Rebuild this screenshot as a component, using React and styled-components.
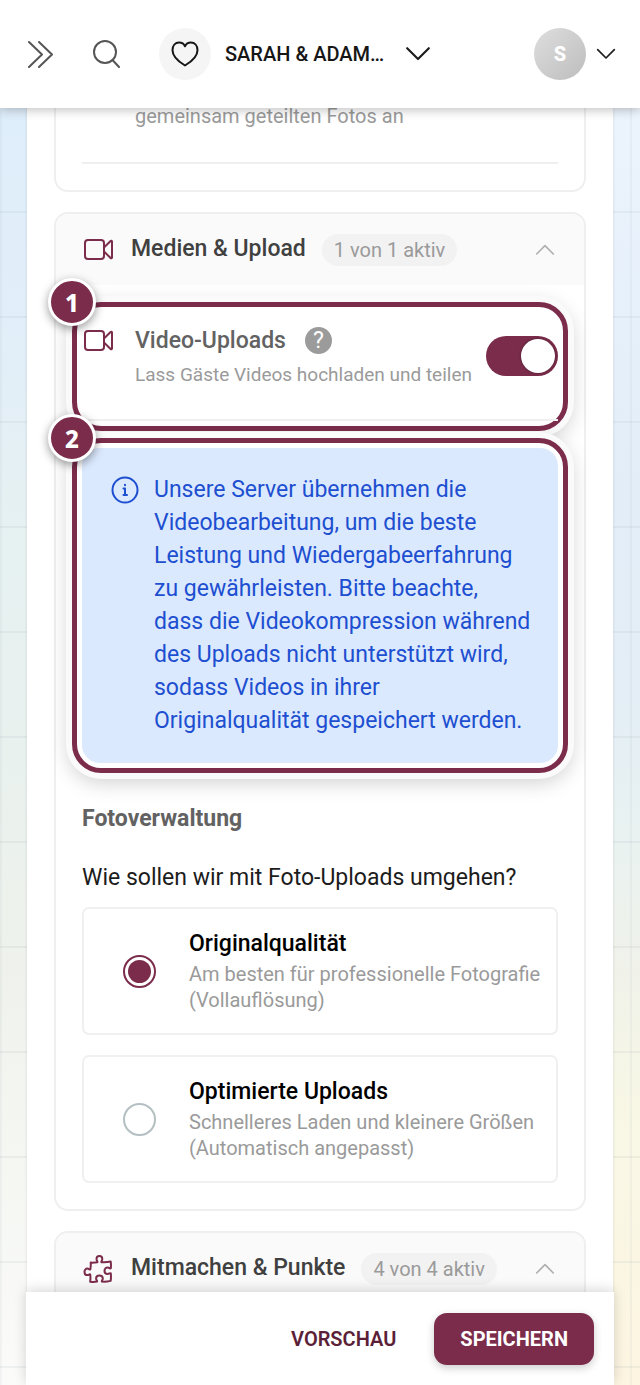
import React, { useState } from "react";
import styled, { createGlobalStyle } from "styled-components";

const WINE = "#7b2c4b";

function VideoIcon() {
  return (
    <Icon $size={32} $color={WINE} viewBox="0 0 32 32" strokeWidth="2">
      <rect x="2" y="6" width="19" height="19" rx="3" />
      <path d="M21 13.500l6.600-6.500c.6-.6 1.400-.2 1.400.5v16c0 .7-.8 1.100-1.400.5L21 17.500" />
    </Icon>
  );
}

function PuzzleIcon() {
  return (
    <Icon $size={32} $color={WINE} viewBox="0 0 32 32" strokeWidth="2">
      <path d="M7.700 9.600c2.400.2 4.500 0 6.700-.4.500-.8-.9-1.500-.9-3.200 0-1.700 1.300-2.900 2.900-2.900s2.900 1.200 2.900 2.900c0 1.700-1.400 2.400-.9 3.200 2.900.3 6 .1 9.300-.6.300 2.300.4 4.500.1 6.700-.8.600-1.500-.9-3.200-.9s-3.100 1.500-3.100 3.400 1.400 3.300 3.100 3.300 2.400-1.400 3.200-.8c.3 2.500.2 5-.1 7.600-3 .7-6 1-8.800.7-.5-.8.9-1.500.9-3.200s-1.500-3-3.400-3-3.300 1.300-3.300 3 1.400 2.400.9 3.200c-2.300.4-4.500.4-6.800.1.300-2.600.4-4.900 0-7.300-.8-.6-1.300.7-2.800.7-1.700 0-2.900-1.400-2.900-3.200s1.200-3.300 2.900-3.300c1.500 0 2 1.500 2.900.9.500-2.200.6-4.500.4-6.900z" />
    </Icon>
  );
}

function Chevron({ up, width = 22, color = "#1c1c1c", weight = 2 }) {
  return (
    <ChevronSvg $width={width} $color={color} viewBox="0 0 24 14" strokeWidth={weight}>
      <path d={up ? "M2 12L12 2l10 10" : "M2 2l10 10L22 2"} />
    </ChevronSvg>
  );
}

function SectionHeader({ icon, title, count }) {
  return (
    <SectionButton type="button">
      {icon}
      <SectionTitle>{title}</SectionTitle>
      <Count>{count}</Count>
      <Chevron up width={20} color="#b0b0b0" />
    </SectionButton>
  );
}

const qualities = [
  {
    id: "original",
    title: "Originalqualität",
    text: "Am besten für professionelle Fotografie (Vollauflösung)",
  },
  {
    id: "optimized",
    title: "Optimierte Uploads",
    text: "Schnelleres Laden und kleinere Größen (Automatisch angepasst)",
  },
];

function App() {
  const [videos, setVideos] = useState(true);
  const [quality, setQuality] = useState("original");

  return (
    <Page>
      <GlobalStyle />
      <TopBar>
        <IconButton type="button" aria-label="Menü">
          <Icon $size={28} $color="#555555" viewBox="0 0 28 28" strokeWidth="2">
            <path d="M2 2l13 12.500L2 27M12 2l13 12.500L12 27" />
          </Icon>
        </IconButton>
        <IconButton type="button" aria-label="Suche">
          <Icon $size={28} $color="#555555" viewBox="0 0 28 28" strokeWidth="2">
            <circle cx="12" cy="12" r="11" />
            <path d="M19.500 20l6.500 7" />
          </Icon>
        </IconButton>
        <EventButton type="button">
          <EventBadge>
            <Icon $size={28} $color="#161616" viewBox="0 0 28 28" strokeWidth="2">
              <path d="M14 25.500C9 22.500 1.500 17.500 1.500 10.200 1.500 5.500 4.300 2.500 8.100 2.500c2.600 0 4.800 1.300 5.900 3.800 1.100-2.500 3.300-3.800 5.900-3.800 3.800 0 6.600 3 6.600 7.700C26.500 17.500 19 22.500 14 25.500z" />
            </Icon>
          </EventBadge>
          <EventName>SARAH &amp; ADAM…</EventName>
          <Chevron width={26} />
        </EventButton>
        <UserButton type="button" aria-label="Konto">
          <Avatar>S</Avatar>
          <Chevron width={20} />
        </UserButton>
      </TopBar>

      <Sheet>
        <Card $first>
          <PreviousText>gemeinsam geteilten Fotos an</PreviousText>
          <Divider />
        </Card>

        <Card>
          <SectionHeader icon={<VideoIcon />} title="Medien & Upload" count="1 von 1 aktiv" />
          <CardBody>
            <Highlight>
              <Step>1</Step>
              <Setting>
                <VideoIcon />
                <SettingText>
                  <SettingTitle>
                    <label htmlFor="videos">Video-Uploads</label>
                    <Help type="button" aria-label="Hilfe">?</Help>
                  </SettingTitle>
                  <SettingHint>Lass Gäste Videos hochladen und teilen</SettingHint>
                </SettingText>
                <Switch
                  id="videos"
                  type="checkbox"
                  role="switch"
                  checked={videos}
                  onChange={(e) => setVideos(e.target.checked)}
                />
              </Setting>
            </Highlight>

            <Highlight>
              <Step>2</Step>
              <Notice>
                <Icon $size={28} $color="#1d4fd0" viewBox="0 0 28 28" strokeWidth="2">
                  <circle cx="14" cy="14" r="12.500" />
                  <path d="M12.500 12.500h1.500v6M12.500 19h3.500M14 8.800v.4" />
                </Icon>
                <NoticeText>
                  Unsere Server übernehmen die Videobearbeitung, um die beste
                  Leistung und Wiedergabeerfahrung zu gewährleisten. Bitte
                  beachte, dass die Videokompression während des Uploads nicht
                  unterstützt wird, sodass Videos in ihrer Originalqualität
                  gespeichert werden.
                </NoticeText>
              </Notice>
            </Highlight>

            <GroupTitle>Fotoverwaltung</GroupTitle>
            <Options>
              <Question>Wie sollen wir mit Foto-Uploads umgehen?</Question>
              {qualities.map((q) => (
                <Option key={q.id}>
                  <Radio
                    type="radio"
                    name="quality"
                    value={q.id}
                    checked={quality === q.id}
                    onChange={() => setQuality(q.id)}
                  />
                  <span>
                    <OptionTitle>{q.title}</OptionTitle>
                    <OptionText>{q.text}</OptionText>
                  </span>
                </Option>
              ))}
            </Options>
          </CardBody>
        </Card>

        <Card>
          <SectionHeader icon={<PuzzleIcon />} title="Mitmachen & Punkte" count="4 von 4 aktiv" />
        </Card>
      </Sheet>

      <Footer>
        <PreviewButton type="button">VORSCHAU</PreviewButton>
        <SaveButton type="button">SPEICHERN</SaveButton>
      </Footer>
    </Page>
  );
}

export default App;

const GlobalStyle = createGlobalStyle`
  * {
    box-sizing: border-box;
  }
  body {
    margin: 0;
    font-family: Roboto, "Liberation Sans", sans-serif;
    color: #1c1c1c;
  }
  button {
    font-family: inherit;
    border: 0;
    background: none;
    padding: 0;
    cursor: pointer;
  }
`;

const Page = styled.div`
  height: 100vh;
  display: flex;
  flex-direction: column;
  overflow: hidden;
  background:
    repeating-linear-gradient(to right, rgba(130, 150, 160, 0.08) 0 2px, transparent 2px 105px),
    repeating-linear-gradient(to bottom, transparent 0 1px, rgba(130, 150, 160, 0.1) 1px 3px, transparent 3px 106px) 0 0 / 100% 105px,
    linear-gradient(to bottom, #dfeefb 8%, #e2eef8 25%, #e6f1f2 38%, #e9f1ee 55%, #eff2ec 70%, #f5f7f3 85%, #fbfbf9) left / 50% 100% no-repeat,
    linear-gradient(to bottom, #ecf4fd 8%, #e2edf8 35%, #e4eef5 52%, #e9f2f1 60%, #f0f2ea 70%, #f8f7e6 80%, #fdf5e2) right / 50% 100% no-repeat;
`;

const Icon = styled.svg`
  width: ${(p) => p.$size}px;
  height: ${(p) => p.$size}px;
  flex: none;
  display: block;
  fill: none;
  stroke: ${(p) => p.$color};
  stroke-linecap: round;
  stroke-linejoin: round;
`;

const ChevronSvg = styled.svg`
  width: ${(p) => p.$width}px;
  flex: none;
  display: block;
  fill: none;
  stroke: ${(p) => p.$color};
  stroke-linecap: round;
  stroke-linejoin: round;
`;

const TopBar = styled.header`
  height: 108px;
  flex: none;
  display: flex;
  align-items: center;
  padding: 0 24px 0 27px;
  background: #ffffff;
  box-shadow: 0 2px 10px rgba(0, 0, 0, 0.25);
  z-index: 2;
`;

const IconButton = styled.button`
  margin-right: 38px;
`;

const EventButton = styled.button`
  display: flex;
  align-items: center;
  color: #161616;
`;

const EventBadge = styled.span`
  width: 52px;
  height: 52px;
  border-radius: 50%;
  display: grid;
  place-items: center;
  background: #f5f5f5;
`;

const EventName = styled.span`
  margin: 0 21px 0 14px;
  font-size: 20px;
  font-weight: 500;
`;

const UserButton = styled.button`
  display: flex;
  align-items: center;
  gap: 10px;
  margin-left: auto;
`;

const Avatar = styled.span`
  width: 52px;
  height: 52px;
  border-radius: 50%;
  display: grid;
  place-items: center;
  background: linear-gradient(135deg, #dedede, #bdbdbd);
  color: #ffffff;
  font-size: 20px;
  font-weight: 800;
`;

/* slides a little way under the top bar */
const Sheet = styled.main`
  flex: 1;
  min-height: 0;
  overflow: hidden;
  margin: -12px 27px 0;
  padding: 0 27px;
  background: #ffffff;
  box-shadow: 0 0 3px rgba(0, 0, 0, 0.12);
`;

const Card = styled.section`
  margin-bottom: 20px;
  border: 2px solid #efefef;
  border-radius: 14px;
  ${(p) =>
    p.$first &&
    `
    border-top: 0;
    border-radius: 0 0 14px 14px;
    padding: 8px 26px 26px;
  `}
`;

const PreviousText = styled.p`
  margin: 0 0 34px;
  padding-left: 53px;
  font-size: 20px;
  line-height: 24px;
  color: #9a9a9a;
`;

const Divider = styled.hr`
  margin: 0;
  border: 0;
  border-top: 2px solid #efefef;
`;

const SectionButton = styled.button`
  width: 100%;
  height: 71px;
  display: flex;
  align-items: center;
  padding: 0 29px 0 27px;
  background: #fafafa;
  border-radius: 12px 12px 0 0;
  & > svg:last-child {
    margin-left: auto;
  }
`;

const SectionTitle = styled.span`
  margin: 0 16px 0 16px;
  padding-bottom: 3px;
  font-size: 23px;
  font-weight: 500;
  color: #404040;
`;

const Count = styled.span`
  padding: 0 12px;
  border-radius: 16px;
  background: #f2f2f2;
  font-size: 20px;
  line-height: 32px;
  color: #9a9a9a;
`;

const CardBody = styled.div`
  padding: 17px 16px 26px;
`;

const Highlight = styled.div`
  position: relative;
  margin-bottom: 7px;
  border: 5px solid ${WINE};
  border-radius: 29px;
  background: #ffffff;
  box-shadow: 0 0 0 6px #fafafa, 0 6px 20px 4px rgba(0, 0, 0, 0.18);
`;

const Step = styled.span`
  position: absolute;
  top: -29px;
  left: -29px;
  width: 48px;
  height: 48px;
  border: 3px solid #ffffff;
  border-radius: 50%;
  display: grid;
  place-items: center;
  background: ${WINE};
  color: #ffffff;
  font: 800 24px "Noto Sans", sans-serif;
  box-shadow: 0 3px 10px rgba(0, 0, 0, 0.4);
  z-index: 1;
`;

const Setting = styled.div`
  display: flex;
  align-items: flex-start;
  height: 114px;
  margin: 0 5px 5px;
  padding: 18px 0 0 1px;
  border-bottom: 2px solid #efefef;
`;

const SettingText = styled.div`
  flex: 1;
  min-width: 0;
  margin-left: 20px;
  white-space: nowrap;
`;

const SettingTitle = styled.div`
  display: flex;
  align-items: center;
  gap: 19px;
  margin-bottom: 5px;
  font-size: 23px;
  font-weight: 500;
  line-height: 31px;
  color: #626262;
`;

const Help = styled.button`
  width: 27px;
  height: 27px;
  border-radius: 50%;
  background: #9b9b9b;
  color: #ffffff;
  font-size: 23px;
  font-weight: 400;
  line-height: 27px;
`;

const SettingHint = styled.div`
  font-size: 19px;
  line-height: 27px;
  color: #9a9a9a;
`;

const Switch = styled.input`
  appearance: none;
  flex: none;
  width: 72px;
  height: 40px;
  margin: 11px 0 0;
  padding: 3px;
  border-radius: 20px;
  background: ${(p) => (p.checked ? WINE : "#bdbdbd")};
  display: flex;
  justify-content: ${(p) => (p.checked ? "flex-end" : "flex-start")};
  cursor: pointer;
  &::before {
    content: "";
    width: 34px;
    height: 34px;
    border-radius: 50%;
    background: #ffffff;
    box-shadow: 0 0 3px rgba(0, 0, 0, 0.4);
  }
`;

const Notice = styled.div`
  display: flex;
  align-items: flex-start;
  gap: 15px;
  margin: 5px;
  padding: 28px 26px 26px 29px;
  border-radius: 18px;
  background: #dbe9fe;
`;

const NoticeText = styled.p`
  margin: -3px 0 0;
  font-size: 23px;
  line-height: 33px;
  color: #1d4fd0;
`;

const GroupTitle = styled.h3`
  margin: 31px 10px 29px;
  font-size: 23px;
  font-weight: 700;
  line-height: 30px;
  color: #626262;
`;

const Options = styled.fieldset`
  margin: 0 10px;
  padding: 0;
  border: 0;
  display: flex;
  flex-direction: column;
  gap: 20px;
`;

const Question = styled.legend`
  padding: 0;
  margin-bottom: 14px;
  font-size: 23px;
  line-height: 30px;
`;

const Option = styled.label`
  display: flex;
  align-items: center;
  gap: 33px;
  height: 128px;
  padding: 0 12px 0 39px;
  border: 2px solid #f0f0f0;
  border-radius: 7px;
  cursor: pointer;
`;

const Radio = styled.input`
  appearance: none;
  flex: none;
  width: 33px;
  height: 33px;
  margin: 0;
  border: 2px solid ${(p) => (p.checked ? WINE : "#b4bfc2")};
  border-radius: 50%;
  display: grid;
  place-items: center;
  &:checked::before {
    content: "";
    width: 23px;
    height: 23px;
    border-radius: 50%;
    background: ${WINE};
  }
`;

const OptionTitle = styled.span`
  display: block;
  margin-bottom: 2px;
  font-size: 23px;
  font-weight: 500;
  line-height: 30px;
  color: #000000;
`;

const OptionText = styled.span`
  display: block;
  font-size: 20px;
  line-height: 26px;
  color: #9a9a9a;
`;

const Footer = styled.footer`
  flex: none;
  display: flex;
  justify-content: flex-end;
  align-items: center;
  gap: 38px;
  margin: 0 26px;
  padding: 21px 20px 20px;
  background: #ffffff;
  box-shadow: 0 -2px 12px rgba(0, 0, 0, 0.16);
  z-index: 1;
`;

const PreviewButton = styled.button`
  font-size: 20px;
  font-weight: 600;
  color: #5c1f38;
`;

const SaveButton = styled.button`
  height: 52px;
  padding: 0 26px;
  border-radius: 13px;
  background: ${WINE};
  color: #ffffff;
  font-size: 20px;
  font-weight: 700;
  box-shadow: 0 3px 8px rgba(0, 0, 0, 0.2);
`;
